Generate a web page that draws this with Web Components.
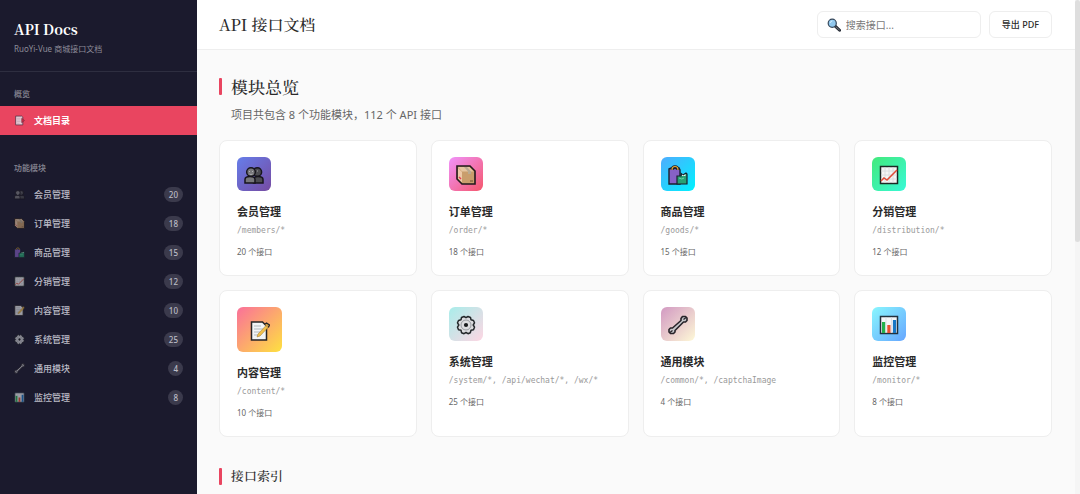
<!DOCTYPE html>
<html lang="zh-CN">
<head>
<meta charset="utf-8">
<title>API 接口文档</title>
<style>
  :root {
    --sans: "Noto Sans", "Noto Sans CJK SC", sans-serif;
    --serif: "Noto Serif SC", "Noto Serif CJK SC", "Source Han Serif SC", "Liberation Serif", "Noto Sans CJK SC", serif;
    --mono: "DejaVu Sans Mono", "Liberation Mono", monospace;
    --accent: #e94560;
    --dark: #1b1a2d;
    --line: #eee;
  }

  body {
    margin: 0;
    background: #fafafa;
    color: #2a2a2a;
    font-family: var(--sans);
  }
</style>
</head>
<body>
<docs-app>
  <docs-sidebar slot="sidebar" heading="API Docs" subtitle="RuoYi-Vue 商城接口文档">
    <nav-group label="概览">
      <nav-item icon="toc" active>文档目录</nav-item>
    </nav-group>
    <nav-group label="功能模块">
      <nav-item icon="members" count="20">会员管理</nav-item>
      <nav-item icon="box" count="18">订单管理</nav-item>
      <nav-item icon="bags" count="15">商品管理</nav-item>
      <nav-item icon="trend" count="12">分销管理</nav-item>
      <nav-item icon="memo" count="10">内容管理</nav-item>
      <nav-item icon="gear" count="25">系统管理</nav-item>
      <nav-item icon="wrench" count="4">通用模块</nav-item>
      <nav-item icon="bars" count="8">监控管理</nav-item>
    </nav-group>
  </docs-sidebar>

  <docs-header slot="header">API 接口文档</docs-header>

  <section-title size="large">模块总览
    <span slot="description">项目共包含 8 个功能模块，112 个 API 接口</span>
  </section-title>
  <module-grid>
    <module-card icon="members" path="/members/*" count="20" from="#667eea" to="#764ba2">会员管理</module-card>
    <module-card icon="box" path="/order/*" count="18" from="#f093fb" to="#f5576c">订单管理</module-card>
    <module-card icon="bags" path="/goods/*" count="15" from="#4facfe" to="#00f2fe">商品管理</module-card>
    <module-card icon="trend" path="/distribution/*" count="12" from="#43e97b" to="#38f9d7">分销管理</module-card>
    <module-card icon="memo" path="/content/*" count="10" from="#fa709a" to="#fee140" large>内容管理</module-card>
    <module-card icon="gear" path="/system/*, /api/wechat/*, /wx/*" count="25" from="#a8edea" to="#fed6e3">系统管理</module-card>
    <module-card icon="wrench" path="/common/*, /captchaImage" count="4" from="#d299c2" to="#fef9d7">通用模块</module-card>
    <module-card icon="bars" path="/monitor/*" count="8" from="#89f7fe" to="#66a6ff">监控管理</module-card>
  </module-grid>
  <section-title>接口索引</section-title>
</docs-app>

<script>
// All icons share a 20x20 view box
const ICONS = {
  toc: `
    <path d="M3 2h11l2 2v14H3z" fill="#e6e3ea" stroke="#39283c" stroke-width="1.4"/>
    <path d="M5 6h7M5 9h7M5 12h7M5 15h5" stroke="#aaa3b3"/>
    <path d="M14 6l5 4-5 4z" fill="#c92a45" stroke="#5c1d30"/>`,
  members: `
    <g stroke="#17151c" stroke-width="1.5" fill="#4c4c51">
      <path d="M9.500 18v-3.500c0-2 1.500-3 4.500-3s5 1 5 3V18z"/>
      <circle cx="13.300" cy="7" r="4.300"/>
      <path d="M1 18v-3.500c0-2 2-3 5-3s5 1 5 3V18z" fill="#77777b"/>
      <circle cx="7" cy="7" r="4.300" fill="#77777b"/>
    </g>
    <path d="M5 6.500h1M8 6.500h1M13 6h1M5.500 9q1.500 1 3 0" stroke="#c8c8cb" stroke-width=".7" fill="none"/>`,
  box: `
    <path d="M1 1h13l5 5v13H6l-5-5z" fill="#c99e6c"/>
    <path d="M2 2h11.500l4 4.500H6z" fill="#e5c5a0"/>
    <path d="M2 3l4 4v10.500L2 13.500z" fill="#edc9a7"/>
    <path d="M8 2l4 4.500v2.500h3V6.500L11 2z" fill="#b9aa91"/>
    <path d="M3 12l2 2" stroke="#e43b53" stroke-width="1.400"/>
    <path d="M14 16h3" stroke="#6f5235"/>
    <path d="M1 1h13l5 5v13H6l-5-5z" fill="none" stroke="#211a1c" stroke-width="1.600"/>`,
  bags: `
    <path d="M1 4l2-1 2 1 2-1 2 1 2-1 1 2v14H1z" fill="#8661c5" stroke="#19212d" stroke-width="1.400"/>
    <path d="M4 5q0-3.500 3-3.500T10 5" fill="none" stroke="#19212d" stroke-width="2.600"/>
    <path d="M4 5q0-3.500 3-3.500T10 5" fill="none" stroke="#edab35" stroke-width="1.200"/>
    <path d="M9 11h4V8.500l2 1.500 3-2 1 1v10H9z" fill="#28a172" stroke="#19212d" stroke-width="1.200"/>
    <path d="M14 9.500l1.500 1 2-1.500v2H14z" fill="#e4f4ec"/>
    <path d="M11 13q3 2 5 0" stroke="#65d6a4" fill="none"/>`,
  trend: `
    <path d="M1.500 1.500h17v17h-17z" fill="#f5f5f5" stroke="#1d2825" stroke-width="1.500"/>
    <path d="M2 6h16M2 10h16M2 14h16M6 2v16M10 2v16M14 2v16" stroke="#d5d8da" stroke-width=".8"/>
    <path d="M2 16l3-3 3 2L18 5" fill="none" stroke="#df4b37" stroke-width="1.500"/>`,
  memo: `
    <path d="M1.500 1h11l4 4v14h-15z" fill="#f2f4f6" stroke="#272426" stroke-width="1.500"/>
    <path d="M4 5h7M4 8h9M4 11h6M4 14h4" stroke="#b3b8bd"/>
    <path d="M7 16l1-3 8-8.500 2 2L10 15z" fill="#f2c14c" stroke="#9a7430" stroke-width=".5"/>
    <path d="M14.500 3.500l2-1.500 3 2-1.200 2.500" fill="#d2a24a" stroke="#272426" stroke-width="1.300"/>`,
  gear: `
    <path d="M8 1.500l2 1.200 2-1.200 2.500 1 .5 2.300 2.500.7 1 2.300-1.300 2.200 1.300 2.200-1 2.500-2.500.5-.7 2.500-2.300 1-2-1.200-2 1.200-2.500-1-.5-2.500-2.500-.5-1-2.500L2.800 10 1.500 7.800l1-2.300L5 4.800l.5-2.300z" fill="#dcdde0" stroke="#24282b" stroke-width="1.500" stroke-linejoin="round"/>
    <circle cx="10" cy="10" r="5" fill="none" stroke="#8d9297" stroke-width=".9"/>
    <circle cx="10" cy="10" r="2.100" fill="#171a1c"/>`,
  wrench: `
    <path d="M13 5.500V3.500L14.500 1.500h3L19 3v2.500L17.500 7h-2L7 15.500v1.500L5.500 18.500h-3L1 17v-2.500L2.500 13h2z" fill="#c5c6ca" stroke="#28242a" stroke-width="1.600" stroke-linejoin="round"/>
    <path d="M15.500 4.500L18 2.500M2 17.500l2.500-2" stroke="#28242a" stroke-width="1.300"/>`,
  bars: `
    <path d="M1.500 1.500h17v17h-17z" fill="#f4f6f8" stroke="#23313d" stroke-width="1.500"/>
    <path d="M7 2v16M12.500 2v16" stroke="#d2d8df" stroke-width=".7"/>
    <path d="M3 7h3.200v11H3z" fill="#22b14c"/>
    <path d="M8.300 10h3.200v8H8.300z" fill="#e8502f"/>
    <path d="M13.900 5h3.200v13h-3.200z" fill="#1676c5"/>`,
  search: `
    <path d="M11 11l7 6.500" stroke="#222832" stroke-width="4.200" stroke-linecap="round"/>
    <path d="M13 13l4.500 4" stroke="#6c6f76" stroke-width="1.500" stroke-linecap="round"/>
    <circle cx="7.500" cy="7.500" r="5.800" fill="#91c8ee" stroke="#36475a" stroke-width="1.700"/>
    <path d="M4.500 7q.5-2.500 3-2.800" stroke="#dff3ff" stroke-width="1.300" fill="none"/>`,
}

class DocIcon extends HTMLElement {
  connectedCallback() {
    if (this.shadowRoot) return
    this.attachShadow({ mode: 'open' }).innerHTML = `
      <style>
        :host { display: block; flex: none; width: 20px; height: 20px; }
        svg { display: block; width: 100%; height: 100%; }
      </style>
      <svg viewBox="0 0 20 20" aria-hidden="true">${ICONS[this.getAttribute('name')]}</svg>
    `
  }
}

class DocsApp extends HTMLElement {
  constructor() {
    super()
    this.attachShadow({ mode: 'open' }).innerHTML = `
      <style>
        :host {
          display: grid;
          grid-template-columns: 197px minmax(0, 1fr) 5px;
          height: 100vh;
          overflow: hidden;
        }

        .page {
          display: flex;
          flex-direction: column;
          min-height: 0;
        }

        main {
          flex: 1;
          min-height: 0;
          overflow: hidden;
          padding: 22px 23px 0 22px;
        }

        .rail { background: #f5f5f5; }

        .thumb {
          height: 49%;
          border-radius: 3px;
          background: #dedede;
        }
      </style>
      <slot name="sidebar"></slot>
      <div class="page">
        <slot name="header"></slot>
        <main><slot></slot></main>
      </div>
      <div class="rail"><div class="thumb"></div></div>
    `
  }
}

class DocsSidebar extends HTMLElement {
  connectedCallback() {
    if (this.shadowRoot) return
    this.attachShadow({ mode: 'open' }).innerHTML = `
      <style>
        :host {
          display: block;
          background: var(--dark);
          color: #fff;
        }

        header {
          padding: 17px 14px 15px;
          border-bottom: 1px solid #2e2e40;
        }

        h1 {
          margin: 0;
          font: 700 14px/24px var(--serif);
        }

        p {
          margin: 1px 0 0;
          color: #8d8c99;
          font-size: 8px;
          line-height: 14px;
        }

        nav {
          display: flex;
          flex-direction: column;
          gap: 26px;
          padding-top: 15px;
        }
      </style>
      <header>
        <h1>${this.getAttribute('heading')}</h1>
        <p>${this.getAttribute('subtitle')}</p>
      </header>
      <nav><slot></slot></nav>
    `
  }
}

class NavGroup extends HTMLElement {
  connectedCallback() {
    if (this.shadowRoot) return
    this.attachShadow({ mode: 'open' }).innerHTML = `
      <style>
        :host { display: block; }

        h2 {
          margin: 0 14px 5px;
          color: #7b7a88;
          font-size: 8px;
          font-weight: 600;
          line-height: 14px;
        }
      </style>
      <h2>${this.getAttribute('label')}</h2>
      <slot></slot>
    `
  }
}

class NavItem extends HTMLElement {
  connectedCallback() {
    if (this.shadowRoot) return
    const count = this.getAttribute('count')
    this.attachShadow({ mode: 'open' }).innerHTML = `
      <style>
        :host { display: block; }

        a {
          display: flex;
          align-items: center;
          gap: 9px;
          height: 29px;
          padding: 0 14px;
          color: #bcbcc6;
          font-size: 9px;
          font-weight: 500;
          text-decoration: none;
        }

        :host([active]) a {
          background: var(--accent);
          color: #fff;
          font-weight: 600;
        }

        doc-icon {
          width: 11px;
          height: 11px;
          opacity: .6;
        }

        :host([active]) doc-icon { opacity: .85; }

        .label { flex: 1; }

        .badge {
          padding: 0 5px;
          border-radius: 8px;
          background: #3b3a4c;
          color: #bcbcc6;
          font-size: 8px;
          line-height: 15px;
        }
      </style>
      <a href="#">
        <doc-icon name="${this.getAttribute('icon')}"></doc-icon>
        <span class="label"><slot></slot></span>
        ${count ? `<span class="badge">${count}</span>` : ''}
      </a>
    `
  }
}

class DocsHeader extends HTMLElement {
  constructor() {
    super()
    this.attachShadow({ mode: 'open' }).innerHTML = `
      <style>
        :host {
          display: flex;
          align-items: center;
          gap: 8px;
          padding: 11px 23px 11px 22px;
          border-bottom: 1px solid var(--line);
          background: #fff;
        }

        h1 {
          flex: 1;
          margin: 0;
          font: 500 16px/24px var(--serif);
        }

        .search, button {
          box-sizing: border-box;
          height: 27px;
          border: 1px solid var(--line);
          border-radius: 6px;
          background: #fff;
        }

        .search {
          display: flex;
          align-items: center;
          gap: 5px;
          width: 164px;
          padding: 0 9px;
        }

        doc-icon {
          width: 14px;
          height: 14px;
        }

        input {
          flex: 1;
          min-width: 0;
          padding: 0;
          border: 0;
          outline: 0;
          background: none;
          font: 10px var(--sans);
        }

        input::placeholder { color: #777; }

        button {
          padding: 0 12px;
          color: #2a2a2a;
          font: 500 9px var(--sans);
        }
      </style>
      <h1><slot></slot></h1>
      <label class="search">
        <doc-icon name="search"></doc-icon>
        <input type="text" placeholder="搜索接口..." aria-label="搜索接口">
      </label>
      <button type="button">导出 PDF</button>
    `
  }
}

class SectionTitle extends HTMLElement {
  constructor() {
    super()
    this.attachShadow({ mode: 'open' }).innerHTML = `
      <style>
        :host { display: block; }

        h2 {
          display: flex;
          align-items: center;
          gap: 9px;
          margin: 0;
          font: 500 13px/22px var(--serif);
        }

        h2::before {
          content: "";
          width: 3px;
          height: 17px;
          border-radius: 1px;
          background: var(--accent);
        }

        :host([size="large"]) h2 {
          font-size: 17px;
          line-height: 29px;
        }

        ::slotted([slot="description"]) {
          display: block;
          margin: 4px 0 16px 12px;
          color: #666;
          font-size: 11px;
          line-height: 19px;
        }
      </style>
      <h2><span><slot></slot></span></h2>
      <slot name="description"></slot>
    `
  }
}

class ModuleGrid extends HTMLElement {
  constructor() {
    super()
    this.attachShadow({ mode: 'open' }).innerHTML = `
      <style>
        :host {
          display: grid;
          grid-template-columns: repeat(auto-fill, minmax(190px, 1fr));
          gap: 14px;
          margin-bottom: 28px;
        }
      </style>
      <slot></slot>
    `
  }
}

class ModuleCard extends HTMLElement {
  connectedCallback() {
    if (this.shadowRoot) return
    this.attachShadow({ mode: 'open' }).innerHTML = `
      <style>
        :host {
          display: block;
          padding: 16px 17px;
          border: 1px solid var(--line);
          border-radius: 8px;
          background: #fff;
        }

        .tile {
          display: flex;
          align-items: center;
          justify-content: center;
          box-sizing: border-box;
          width: 34px;
          height: 34px;
          padding-top: 2px;
          margin-bottom: 12px;
          border-radius: 6px;
          background: linear-gradient(135deg, ${this.getAttribute('from')}, ${this.getAttribute('to')});
        }

        :host([large]) .tile {
          width: 45px;
          height: 45px;
        }

        h3 {
          margin: 0 0 3px;
          font-size: 11px;
          font-weight: 600;
          line-height: 18px;
        }

        code {
          display: block;
          margin-bottom: 7px;
          color: #999;
          font: 8px/14px var(--mono);
        }

        p {
          margin: 0;
          color: #666;
          font-size: 8px;
          line-height: 14px;
        }
      </style>
      <div class="tile"><doc-icon name="${this.getAttribute('icon')}"></doc-icon></div>
      <h3><slot></slot></h3>
      <code>${this.getAttribute('path')}</code>
      <p>${this.getAttribute('count')} 个接口</p>
    `
  }
}

customElements.define('doc-icon', DocIcon)
customElements.define('docs-app', DocsApp)
customElements.define('docs-sidebar', DocsSidebar)
customElements.define('nav-group', NavGroup)
customElements.define('nav-item', NavItem)
customElements.define('docs-header', DocsHeader)
customElements.define('section-title', SectionTitle)
customElements.define('module-grid', ModuleGrid)
customElements.define('module-card', ModuleCard)
</script>
</body>
</html>
